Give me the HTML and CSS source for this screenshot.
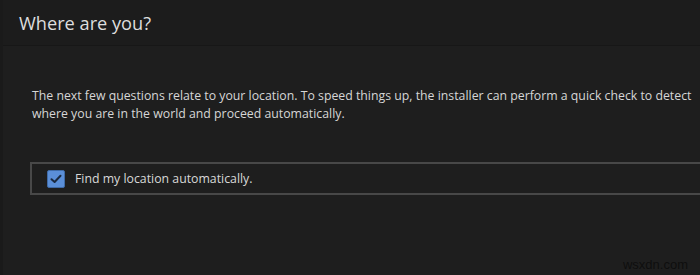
FILE: index.html
```html
<!DOCTYPE html>
<html lang="en">
<head>
<meta charset="utf-8">
<link rel="stylesheet" href="styles.css">
</head>
<body>
<div class="page">
  <header class="header">
    <h1 class="title">Where are you?</h1>
  </header>
  <main class="content">
    <p class="intro">The next few questions relate to your location. To speed things up, the installer can perform a quick check to detect<br>where you are in the world and proceed automatically.</p>
    <label class="option">
      <span class="check">
        <svg width="12" height="10" viewBox="0 0 12 10"><path d="M1.5 5.2 L4.6 8 L10.5 1.8" fill="none" stroke="#1b2a40" stroke-width="2" stroke-linecap="round" stroke-linejoin="round"/></svg>
      </span>
      <span class="option-label">Find my location automatically.</span>
    </label>
  </main>
  <div class="watermark">wsxdn.com</div>
</div>
</body>
</html>
```

FILE: styles.css
```css
* { box-sizing: border-box; }
html, body {
  margin: 0;
  height: 100%;
  background: #1e1e1e;
}
body {
  font-family: "Open Sans", "Noto Sans", sans-serif;
  color: #d8d8d8;
  overflow: hidden;
}
.page {
  position: relative;
  height: 275px;
  border-left: 3px solid #1a1a1a;
}
.header {
  height: 46px;
  background: #1c1c1c;
  border-bottom: 1px solid #171717;
  padding-left: 16px;
  display: flex;
  align-items: center;
}
.title {
  margin: 0;
  font-size: 18.2px;
  font-weight: 400;
  color: #dedede;
}
.content {
  padding: 41px 0 0 29px;
}
.intro {
  margin: 0;
  font-size: 12.3px;
  line-height: 18px;
  color: #d6d6d6;
  white-space: nowrap;
}
.option {
  display: flex;
  align-items: center;
  gap: 10px;
  margin: 39px 0 0 -2px;
  height: 33px;
  width: 700px;
  border: 2px solid #484848;
  border-right: none;
  padding-left: 15px;
}
.check {
  width: 18px;
  height: 18px;
  background: #5b8fd8;
  border: 1px solid #3f6aa6;
  border-radius: 2px;
  display: flex;
  align-items: center;
  justify-content: center;
}
.option-label {
  font-size: 12.3px;
  color: #d8d8d8;
}
.watermark {
  position: absolute;
  right: 12px;
  bottom: 3px;
  font-family: "Liberation Sans", sans-serif;
  font-size: 13px;
  color: #0e0e0e;
}
```
